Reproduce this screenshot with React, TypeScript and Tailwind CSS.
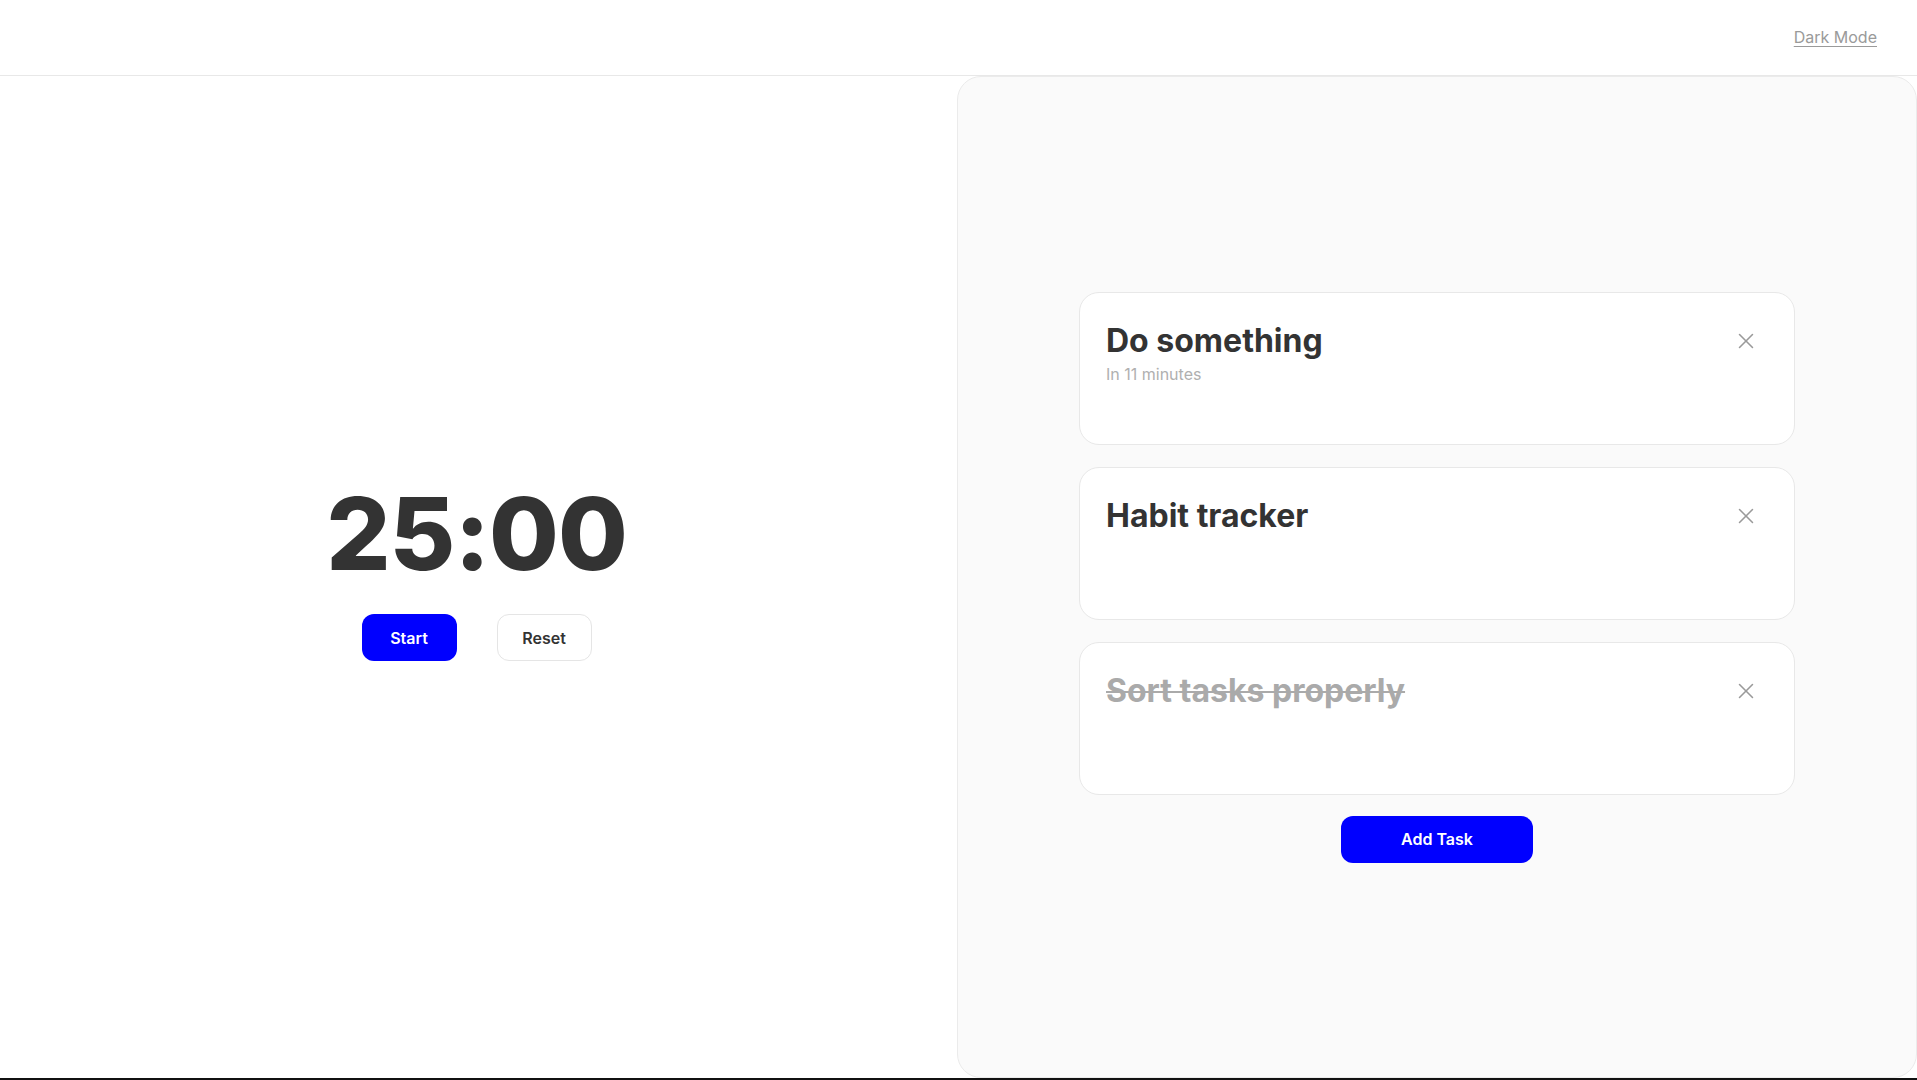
import React from 'react';
import { X } from 'lucide-react';

interface Task {
  title: string;
  note?: string;
  done?: boolean;
}

const tasks: Task[] = [
  { title: 'Do something', note: 'In 11 minutes' },
  { title: 'Habit tracker' },
  { title: 'Sort tasks properly', done: true },
];

const App: React.FC = () => {
  return (
    <div
      className="flex h-[1080px] w-full flex-col overflow-hidden bg-white text-[#333]"
      style={{ fontFamily: 'Inter, "Liberation Sans", sans-serif' }}
    >
      {/* Header */}
      <header className="flex h-[76px] shrink-0 items-center justify-end border-b border-[#e8e8e8] px-10 pb-0.5">
        <button className="text-base text-[#9a9a9a] underline underline-offset-[3px] decoration-1">
          Dark Mode
        </button>
      </header>

      <main className="flex min-h-0 flex-1 border-b-2 border-[#111]">
        {/* Timer */}
        <section className="flex flex-1 flex-col items-center justify-center pb-[10px] pr-1">
          <div className="text-[101px] font-extrabold leading-none tracking-[-0.01em] text-[#333]">
            25:00
          </div>
          <div className="mt-[30px] flex gap-10">
            <button className="h-[47px] w-[95px] rounded-xl bg-[#0000ff] text-base font-semibold text-white">
              Start
            </button>
            <button className="h-[47px] w-[95px] rounded-xl border border-[#e5e5e5] bg-white text-base font-semibold text-[#333]">
              Reset
            </button>
          </div>
        </section>

        {/* Tasks */}
        <section className="flex w-[960px] flex-col items-center justify-center rounded-3xl border border-[#ebebeb] bg-[#fafafa]">
          <div className="flex w-[716px] flex-col gap-[22px]">
            {tasks.map((task) => (
              <div
                key={task.title}
                className="flex h-[153px] items-start justify-between rounded-[20px] border border-[#e8e8e8] bg-white pb-[27px] pt-[28px] pl-[26px] pr-[35px]"
              >
                <div className="flex flex-col">
                  <h3
                    className={`text-[32px] font-bold leading-[40px] ${
                      task.done ? 'text-[#aaa] line-through decoration-2' : 'text-[#333]'
                    }`}
                  >
                    {task.title}
                  </h3>
                  {task.note && <p className="mt-px text-base text-[#b0b0b0]">{task.note}</p>}
                </div>
                <button className="mt-[7px] text-[#9a9a9a]">
                  <X className="h-[26px] w-[26px]" strokeWidth={1.4} />
                </button>
              </div>
            ))}
          </div>
          <button className="mt-[21px] h-[47px] w-[192px] rounded-xl bg-[#0000ff] text-base font-semibold text-white">
            Add Task
          </button>
        </section>
      </main>
    </div>
  );
};

export default App;
